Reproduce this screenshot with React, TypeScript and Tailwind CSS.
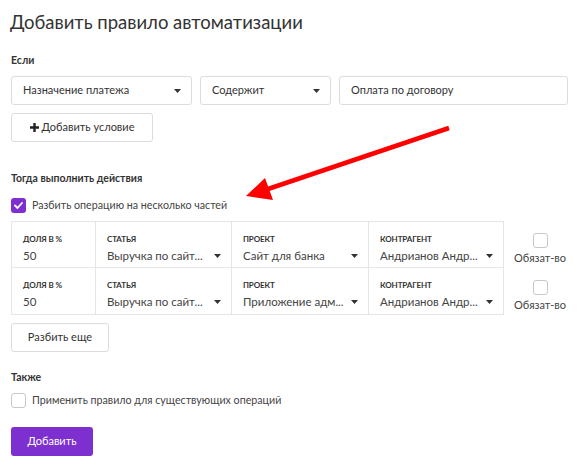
import React from 'react';

const Caret = () => (
  <svg width="7" height="4" viewBox="0 0 7 4" className="shrink-0">
    <path d="M0 0 L7 0 L3.5 4 Z" fill="#333" />
  </svg>
);

const Select = ({ value, width }: { value: string; width: string }) => (
  <div className={`${width} h-[29px] flex items-center justify-between pl-[11px] pr-[10px] border border-[#dcdcdc] rounded-[3px] bg-white text-[11px] text-[#333]`}>
    <span>{value}</span>
    <Caret />
  </div>
);

const Checkbox = ({ checked }: { checked?: boolean }) =>
  checked ? (
    <div className="w-[15px] h-[15px] rounded-[3px] bg-[#7d2fd0] flex items-center justify-center">
      <svg width="9" height="7" viewBox="0 0 9 7">
        <path d="M1 3.5 L3.5 6 L8 1" stroke="white" strokeWidth="1.8" fill="none" strokeLinecap="round" strokeLinejoin="round" />
      </svg>
    </div>
  ) : (
    <div className="w-[15px] h-[15px] rounded-[3px] border border-[#c8c8c8] bg-white" />
  );

interface Split {
  share: string;
  article: string;
  project: string;
  counterparty: string;
}

const splits: Split[] = [
  { share: '50', article: 'Выручка по сайт...', project: 'Сайт для банка', counterparty: 'Андрианов Андр...' },
  { share: '50', article: 'Выручка по сайт...', project: 'Приложение адм...', counterparty: 'Андрианов Андр...' },
];

const Cell = ({ label, value, width, dropdown, last }: { label: string; value: string; width: string; dropdown?: boolean; last?: boolean }) => (
  <div className={`${width} h-full pl-[11px] pr-[10px] pt-[12px] ${last ? '' : 'border-r border-[#e6e6e6]'}`}>
    <div className="text-[8px] font-bold text-[#333] uppercase leading-[11px] tracking-[-0.1px]">{label}</div>
    <div className="mt-[3px] flex items-center justify-between text-[11.5px] text-[#444] leading-[15px] whitespace-nowrap">
      <span>{value}</span>
      {dropdown && <Caret />}
    </div>
  </div>
);

const App: React.FC = () => {
  return (
    <div className="relative w-[583px] h-[473px] bg-white px-[11px] text-[#333]" style={{ fontFamily: 'Lato, "Noto Sans", sans-serif' }}>
      <h1 className="pt-[9px] text-[18.5px] leading-[26px] text-[#333] font-normal -ml-[1px]">Добавить правило автоматизации</h1>

      <div className="mt-[18px] text-[10.5px] font-bold leading-[14px]">Если</div>
      <div className="mt-[9px] flex gap-[8px]">
        <Select value="Назначение платежа" width="w-[181px]" />
        <Select value="Содержит" width="w-[131px]" />
        <div className="w-[229px] h-[29px] flex items-center pl-[11px] border border-[#dcdcdc] rounded-[3px] text-[11px] text-[#333]">
          Оплата по договору
        </div>
      </div>
      <button className="mt-[8px] h-[29px] w-[142px] flex items-center justify-center gap-[3px] border border-[#dcdcdc] rounded-[3px] text-[11px] text-[#333] bg-white">
        <svg width="9" height="9" viewBox="0 0 9 9">
          <path d="M4.5 0 V9 M0 4.5 H9" stroke="#222" strokeWidth="2.4" />
        </svg>
        Добавить условие
      </button>

      <div className="mt-[29px] text-[10.5px] font-bold leading-[14px]">Тогда выполнить действия</div>
      <div className="mt-[12px] flex items-center gap-[6px]">
        <Checkbox checked />
        <span className="text-[10.7px] text-[#444]">Разбить операцию на несколько частей</span>
      </div>

      <div className="mt-[8px] flex flex-col">
        {splits.map((s, i) => (
          <div key={i} className="flex items-stretch">
            <div className={`w-[493px] h-[47px] flex border-x border-[#e6e6e6] ${i === 0 ? 'border-t' : ''} border-b`}>
              <Cell label="Доля в %" value={s.share} width="w-[84px]" />
              <Cell label="Статья" value={s.article} width="w-[136px]" dropdown />
              <Cell label="Проект" value={s.project} width="w-[137px]" dropdown />
              <Cell label="Контрагент" value={s.counterparty} width="w-[134px]" dropdown last />
            </div>
            <div className="flex-1 flex flex-col items-center pt-[12px] pl-[4px]">
              <Checkbox />
              <span className="mt-[3px] text-[11px] text-[#444] leading-[14px]">Обязат-во</span>
            </div>
          </div>
        ))}
      </div>

      <button className="mt-[8px] h-[29px] w-[98px] flex items-center justify-center border border-[#dcdcdc] rounded-[3px] text-[11px] text-[#333] bg-white">
        Разбить еще
      </button>

      <div className="mt-[18px] text-[10.5px] font-bold leading-[14px]">Также</div>
      <div className="mt-[8px] flex items-center gap-[6px]">
        <Checkbox />
        <span className="text-[10.7px] text-[#444]">Применить правило для существующих операций</span>
      </div>

      <button className="mt-[19px] h-[29px] w-[82px] flex items-center justify-center rounded-[3px] bg-[#7d2fd0] text-[11px] text-white">
        Добавить
      </button>

      <svg className="absolute left-0 top-0 pointer-events-none" width="583" height="473">
        <line x1="449" y1="128" x2="268" y2="189" stroke="#ff0000" strokeWidth="4.5" />
        <polygon points="246,196 265,178 273,200" fill="#ff0000" />
      </svg>
    </div>
  );
};

export default App;
